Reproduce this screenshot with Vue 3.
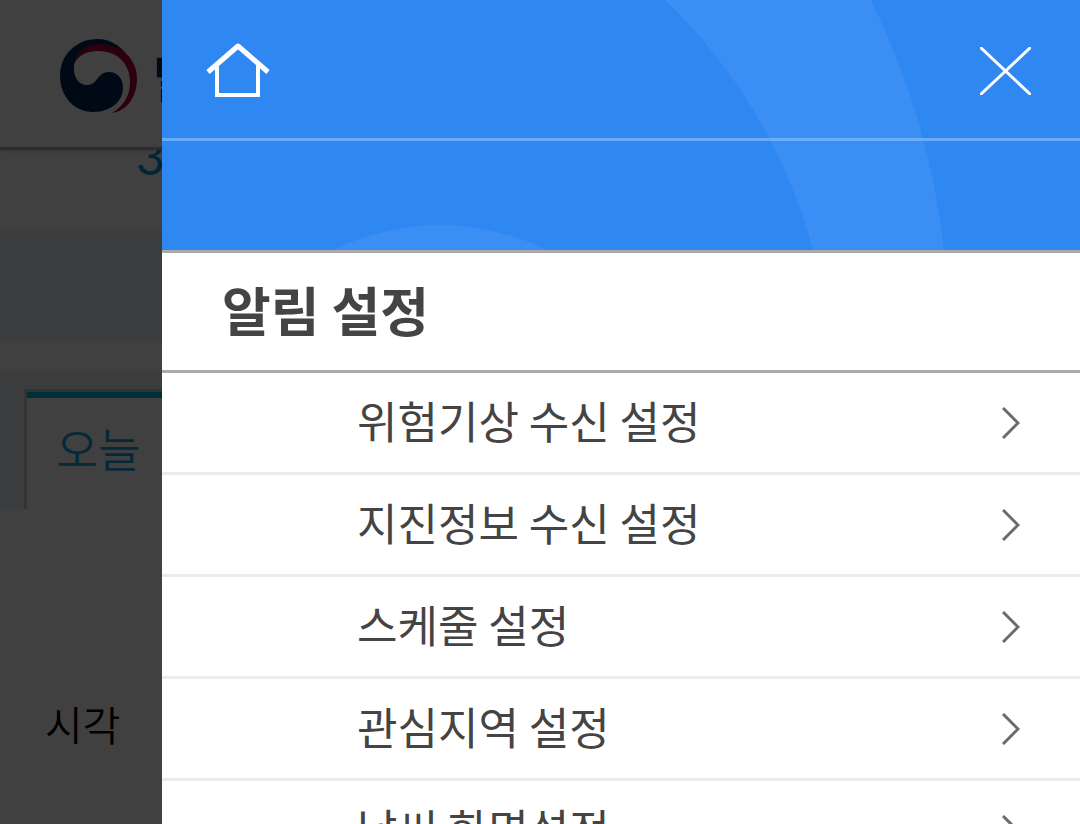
<script setup>
import { ref } from "vue";

const open = ref(true);

const items = ref([
  { id: "warning", label: "위험기상 수신 설정" },
  { id: "quake", label: "지진정보 수신 설정" },
  { id: "schedule", label: "스케줄 설정" },
  { id: "region", label: "관심지역 설정" },
  { id: "display", label: "날씨 화면설정" },
]);
</script>

<template>
  <div class="screen">
    <!-- weather page behind the drawer -->
    <div class="page">
      <header class="page-header">
        <svg class="logo" viewBox="0 0 77 74" aria-hidden="true">
          <path
            fill="#00285a"
            d="M68 17C60 6 49 0 38 0C16 0 0 16 0 37C0 58 15 73 33 73C51 73 63 62 63 49C63 39 57 33 49 33C37 33 38 46 27 46C19 46 14 39 14 30C14 15 25 6 39 6C50 6 60 9 68 17Z"
          />
          <path
            fill="#b4003c"
            d="M14 25C17 12 27 5 40 5C61 5 77 20 77 39C77 58 67 72 52 74C64 67 70 56 70 43C70 24 57 12 38 12C26 12 18 17 14 25Z"
          />
        </svg>
        <span class="site-name">날씨누리</span>
      </header>

      <div class="temperature"><span>3</span></div>
      <div class="band"></div>

      <div class="tabs">
        <a class="tab" href="#today">오늘</a>
      </div>
      <div class="time-label">시각</div>
    </div>

    <div v-if="open" class="overlay" @click="open = false"></div>

    <!-- settings drawer -->
    <aside v-if="open" class="drawer">
      <div class="drawer-top">
        <svg class="pattern" viewBox="0 0 918 250" preserveAspectRatio="xMaxYMin slice" aria-hidden="true">
          <path d="M503 0A540 540 0 0 1 651 250H782A755 755 0 0 0 709 0Z" />
          <circle cx="278" cy="466" r="241" />
        </svg>
        <nav class="drawer-bar">
          <a class="icon-link" href="#home" aria-label="홈">
            <svg width="64" height="56" viewBox="0 0 64 56" fill="none" stroke="#fff" stroke-width="4">
              <path d="M2 29L32 3L62 29" stroke-width="5" stroke-linejoin="round" />
              <path d="M11 22V52H52V22" />
            </svg>
          </a>
          <button class="icon-button" type="button" aria-label="닫기" @click="open = false">
            <svg width="51" height="48" viewBox="0 0 51 48" fill="none" stroke="#fff" stroke-width="3">
              <path d="M0 0L51 48M51 0L0 48" />
            </svg>
          </button>
        </nav>
      </div>

      <h2 class="title">알림 설정</h2>

      <ul class="menu">
        <li v-for="item in items" :key="item.id">
          <a class="menu-link" :href="`#${item.id}`">
            <span class="menu-label">{{ item.label }}</span>
            <svg width="18" height="32" viewBox="0 0 18 32" fill="none" stroke="#6b6b6b" stroke-width="3">
              <path d="M1 1L16 16L1 31" />
            </svg>
          </a>
        </li>
      </ul>
    </aside>
  </div>
</template>

<style>
body {
  margin: 0;
  overflow: hidden;
}
</style>

<style scoped>
.screen {
  position: relative;
  height: 100vh;
  overflow: hidden;
  font-family: "Noto Sans CJK KR", sans-serif;
}

a {
  color: inherit;
  text-decoration: none;
}

svg {
  display: block;
}

/* page */
.page {
  height: 100%;
  background: #fff;
}

.page-header {
  position: relative;
  display: flex;
  align-items: center;
  gap: 16px;
  box-sizing: border-box;
  height: 150px;
  padding: 4px 60px 0;
  border-bottom: 3px solid #b4b4b4;
  box-shadow: 0 1px 4px rgba(0, 0, 0, 0.2);
}

.logo {
  width: 77px;
  height: 74px;
}

.site-name {
  color: #0a2c54;
  font-size: 50px;
  font-weight: 700;
}

.temperature {
  height: 79px;
  overflow: hidden;
  padding-left: 136px;
  color: #1098d0;
  font-family: Lato, sans-serif;
  font-size: 50px;
  line-height: 60px;
}

.temperature span {
  display: block;
  margin-top: -24px;
}

.band {
  height: 112px;
  background: #f0f4fb;
}

.tabs {
  box-sizing: border-box;
  height: 138px;
  margin-top: 30px;
  padding: 18px 0 0 24px;
  background: #f0f4fb;
}

.tab {
  display: block;
  box-sizing: border-box;
  height: 120px;
  padding-left: 29px;
  border-top: 3px solid #c4ccd4;
  border-left: 3px solid #c4ccd4;
  background: #fff;
  box-shadow: inset 0 6px #00c0dc;
  color: #14a4e0;
  font-size: 46px;
  font-weight: 350;
  line-height: 110px;
}

.time-label {
  margin-top: 184px;
  padding-left: 45px;
  color: #000;
  font-size: 41px;
  font-weight: 350;
  line-height: 60px;
}

.overlay {
  position: absolute;
  inset: 0;
  background: rgba(0, 0, 0, 0.75);
}

/* drawer */
.drawer {
  position: absolute;
  top: 0;
  right: 0;
  bottom: 0;
  width: 85%;
  overflow: hidden;
  background: #fff;
  color: #444;
}

.drawer-top {
  position: relative;
  height: 250px;
  border-bottom: 3px solid #aaa;
  background: #2f87f2;
}

.pattern {
  position: absolute;
  inset: 0;
  width: 100%;
  height: 100%;
  fill: #3b8ef4;
}

.drawer-bar {
  position: relative;
  display: flex;
  align-items: center;
  justify-content: space-between;
  box-sizing: border-box;
  height: 141px;
  padding: 4px 49px 0 44px;
  border-bottom: 3px solid rgba(150, 200, 255, 0.55);
}

.icon-button {
  padding: 0;
  border: 0;
  background: none;
  cursor: pointer;
}

.title {
  margin: 0;
  padding: 0 0 4px 60px;
  border-bottom: 3px solid #aaa;
  font-size: 53px;
  font-weight: 700;
  line-height: 113px;
}

.menu {
  margin: 0;
  padding: 0;
  list-style: none;
}

.menu-link {
  display: flex;
  align-items: center;
  justify-content: space-between;
  padding: 0 60px 0 195px;
  border-bottom: 3px solid #ebebeb;
  font-size: 44px;
}

.menu-label {
  padding-bottom: 4px;
  line-height: 95px;
}
</style>
